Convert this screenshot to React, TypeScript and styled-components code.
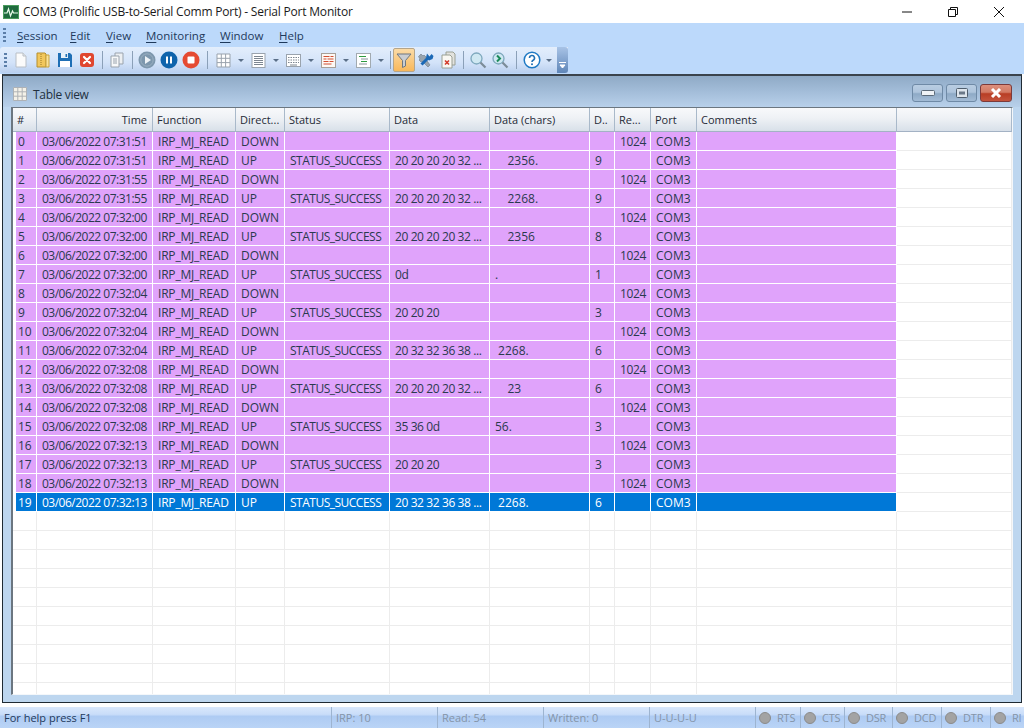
import React from "react";
import styled, { createGlobalStyle } from "styled-components";

const Global = createGlobalStyle`
  html, body { margin: 0; padding: 0; width: 1024px; height: 728px; overflow: hidden; background: #fff; }
  * { box-sizing: border-box; }
  body { font-family: "Open Sans", "Noto Sans", "Liberation Sans", sans-serif; font-size: 12px; color: #26384d; }
`;

const Page = styled.div`
  width: 1024px; height: 728px; display: flex; flex-direction: column; overflow: hidden;
`;
const TitleBar = styled.div`
  height: 23px; flex: none; display: flex; align-items: center; background: #fff; padding: 0 2px 0 3px;
`;
const TitleText = styled.span`
  margin-left: 4px; font-size: 12px; color: #1a1a1a; white-space: nowrap; flex: 1; letter-spacing: -0.2px;
`;
const WinBtn = styled.div`
  width: 46px; height: 23px; display: flex; align-items: center; justify-content: center;
`;
const Band = styled.div`
  flex: none; height: 51px; background: #bcd9fb; display: flex; flex-direction: column;
`;
const MenuBar = styled.div`
  height: 24px; flex: none; display: flex; align-items: center; padding-left: 3px;
`;
const Grip = styled.div`
  width: 3px; height: 14px; flex: none;
  background: repeating-linear-gradient(to bottom, #5b7ea8 0 2px, transparent 2px 4px);
`;
const MenuGap = styled.div`
  width: 11px; flex: none;
`;
const MenuItem = styled.span<{ $w: number }>`
  width: ${p => p.$w}px; flex: none; color: #1e395b; font-size: 11.5px; white-space: nowrap;
  u { text-underline-offset: 2px; }
`;
const ToolBar = styled.div`
  height: 26px; width: 568px; flex: none; display: flex; align-items: center; padding-left: 4px;
  background: linear-gradient(to bottom, #e3eefc 0%, #d3e3f9 60%, #b9cfee 100%);
  border-radius: 3px 0 0 3px; position: relative;
`;
const ToolBtn = styled.div<{ $on?: boolean }>`
  width: 22px; height: 24px; flex: none; display: flex; align-items: center; justify-content: center;
  ${p => p.$on ? `background: linear-gradient(to bottom,#fbdba6,#f8b85c); border:1px solid #b5a58a; border-radius:2px;` : ""}
`;
const Caret = styled.div<{ $w?: number }>`
  width: ${p => p.$w ?? 13}px; flex: none; display: flex; justify-content: center;
  &::after { content: ""; border-left: 3px solid transparent; border-right: 3px solid transparent; border-top: 3px solid #5a6f88; }
`;
const Sep = styled.div<{ $w: number }>`
  width: ${p => p.$w}px; height: 18px; flex: none; display: flex; justify-content: center;
  &::after { content: ""; width: 1px; height: 100%; background: #8ba0b8; }
`;
const Spacer = styled.div`
  width: 3px; flex: none;
`;
const Handle = styled.div`
  position: absolute; right: 0; top: 0; bottom: 0; width: 11px;
  background: linear-gradient(to bottom, #a8c3e6, #5f86b8); border-radius: 0 3px 3px 0;
  display: flex; align-items: flex-end; justify-content: center; padding-bottom: 3px;
`;
const Work = styled.div`
  flex: 1; min-height: 0; background: #fff; display: flex; flex-direction: column;
`;
const Frame = styled.div`
  flex: 1; min-height: 0; margin: 0 2px 4px 2px; border: 1px solid #1f2a33; border-top-width: 2px; border-top-color: #3a434c;
  background: #bdd6ef; display: flex; flex-direction: column; padding: 0 8px 7px 8px;
`;
const Caption = styled.div`
  height: 31px; flex: none; margin: 0 -8px; padding: 3px 9px 0 10px; display: flex; align-items: center; gap: 3px;
  background: linear-gradient(to bottom, #8faac6 0%, #a3bdd9 50%, #b8d0ea 100%);
`;
const CapIcon = styled.div`
  display: flex; padding-top: 2px;
`;
const CapTitle = styled.span`
  flex: 1; margin-left: 3px; padding-top: 3px; font-size: 12px; color: #22303f; letter-spacing: -0.3px;
`;
const CapBtn = styled.div<{ $close?: boolean }>`
  width: ${p => p.$close ? 32 : 31}px; height: 18px; border-radius: 3px; display: flex; align-items: center; justify-content: center;
  border: 1px solid ${p => p.$close ? "#7c3a3a" : "#6f8aa6"};
  background: ${p => p.$close
    ? "linear-gradient(to bottom,#dd8f7c 0%,#d27a64 45%,#b83d24 55%,#c4543d 100%)"
    : "linear-gradient(to bottom,#b9cde2 0%,#aec4dc 45%,#8eaac6 55%,#a3bcd6 100%)"};
`;
const Table = styled.div`
  flex: 1; min-height: 0; background: #fff; border-top: 1px solid #6b7680; border-left: 2px solid #6b7680;
  border-right: 1px solid #f4f7fa; border-bottom: 1px solid #f4f7fa; overflow: hidden;
`;
const cols = "116px 83px 49px 105px 100px 100px 25px 36px 46px 200px 1fr";
const Header = styled.div`
  height: 24px; display: grid; grid-template-columns: 24px ${cols};
`;
const Head = styled.div<{ $right?: boolean }>`
  display: flex; align-items: center; padding: 0 5px 1px 4px; justify-content: ${p => p.$right ? "flex-end" : "flex-start"};
  font-size: 11px; color: #1f2a36; white-space: nowrap; overflow: hidden;
  border-right: 1px solid #a9b9ca; border-bottom: 1px solid #a3b2c4;
  background: linear-gradient(to bottom, #f8f9fb 0%, #eef1f5 45%, #d8e0e9 100%);
`;
const Row = styled.div`
  height: 19px; display: grid; grid-template-columns: 3px 21px ${cols};
`;
type Tone = "pink" | "blue" | "empty";
const Cell = styled.div<{ $tone: Tone; $tight?: number; $inset?: number }>`
  padding: 0 2px 0 ${p => p.$inset ?? 5}px; line-height: 20px; white-space: pre; overflow: hidden;
  letter-spacing: ${p => p.$tight ?? 0}px;
  background: ${p => p.$tone === "pink" ? "#e0a3fb" : p.$tone === "blue" ? "#0078d7" : "#fff"};
  color: ${p => p.$tone === "blue" ? "#fff" : "#2a3a4e"};
  border-right: 1px solid ${p => p.$tone === "empty" ? "#ececec" : "#fff"};
  border-bottom: 1px solid ${p => p.$tone === "empty" ? "#ececec" : "#fff"};
`;
const Gutter = styled.div<{ $line?: boolean }>`
  border-bottom: 1px solid ${p => p.$line ? "#ececec" : "#fff"};
`;
const Status = styled.div`
  height: 21px; flex: none; display: flex; align-items: center; font-size: 11px;
  background: linear-gradient(to bottom, #d9e8fc 0%, #c9ddf9 35%, #aecbf3 45%, #bad4f6 100%);
`;
const StatusCell = styled.div<{ $w: number; $help?: boolean; $led?: boolean }>`
  width: ${p => p.$w}px; height: 100%; flex: none; display: flex; align-items: center; gap: 6px; white-space: nowrap;
  padding-left: ${p => p.$led ? 3 : 4}px;
  color: ${p => p.$help ? "#1e395b" : "#8494a8"};
  letter-spacing: ${p => p.$led ? -0.2 : 0}px;
  border-left: ${p => p.$help ? "none" : "1px solid #9db4d0"};
`;
const Led = styled.span`
  width: 12px; height: 12px; border-radius: 50%; background: #a3a3a3; border: 1px solid #8b8b8b; flex: none;
`;

const S = { width: 18, height: 18, viewBox: "0 0 18 18" };
const NewIcon = () => <svg {...S}><path d="M4 2h7l3 3v11H4z" fill="#fbfbfb" stroke="#b9bfc6" /><path d="M11 2v3h3" fill="#e6e9ec" stroke="#b9bfc6" /></svg>;
const FolderIcon = () => <svg {...S}><path d="M3 2h8l1 1v13H3z" fill="#f2c75c" stroke="#b58e2c" /><path d="M12 4h3v12h-3z" fill="#fbe39a" stroke="#c9a23c" /><path d="M7 3v12" stroke="#9c7a2a" strokeDasharray="1 1" /></svg>;
const SaveIcon = () => <svg {...S}><path d="M2 2h12l2 2v12H2z" fill="#1f6fb5" /><rect x="5" y="2" width="7" height="5" fill="#e9f2fa" /><rect x="9.5" y="3" width="1.6" height="3" fill="#1f6fb5" /><rect x="4" y="10" width="10" height="6" fill="#fff" /></svg>;
const CloseRedIcon = () => <svg {...S}><rect x="2" y="2" width="14" height="14" rx="3" fill="#e0472f" /><path d="M6 6l6 6M12 6l-6 6" stroke="#fff" strokeWidth="2.2" strokeLinecap="round" /></svg>;
const CopiesIcon = () => <svg {...S}><path d="M7 2h8v11H7z" fill="#eceff2" stroke="#9aa3ad" /><path d="M3 5h8v11H3z" fill="#f7f8f9" stroke="#9aa3ad" /><path d="M5 8h4M5 10h4M5 12h4" stroke="#9aa3ad" /></svg>;
const Round = ({ c, children }: { c: string; children: React.ReactNode }) => <svg {...S}><circle cx="9" cy="9" r="8.5" fill={c} />{children}</svg>;
const PlayIcon = () => <Round c="#7d97ad"><circle cx="9" cy="9" r="6.2" fill="none" stroke="#9bb0c2" /><path d="M7 5l6 4-6 4z" fill="#eef3f7" /></Round>;
const PauseIcon = () => <Round c="#0f64ac"><path d="M7 5.5v7M11 5.5v7" stroke="#fff" strokeWidth="2" /></Round>;
const StopIcon = () => <Round c="#e54a32"><rect x="5.5" y="5.5" width="7" height="7" rx="1" fill="#fff" /></Round>;
const GridIcon = () => <svg {...S}><path d="M3 3h13v13H3zM3 7.3h13M3 11.6h13M7.3 3v13M11.6 3v13" fill="#fff" stroke="#9aa3ad" /></svg>;
const ListIcon = () => <svg {...S}><rect x="3" y="2.5" width="13" height="14" fill="#fff" stroke="#9aa3ad" /><path d="M5 5.5h9M5 7.5h9M5 9.5h9M5 11.5h9M5 13.5h9" stroke="#7d8690" /></svg>;
const KeysIcon = () => <svg {...S}><rect x="2.5" y="3.5" width="14" height="12" fill="#fff" stroke="#9aa3ad" /><path d="M4 6.5h11M4 9h11M4 11.5h11" stroke="#7d8690" strokeDasharray="1.5 1" /><path d="M6 14h7" stroke="#7d8690" /></svg>;
const RedListIcon = () => <svg {...S}><rect x="2.5" y="2.5" width="14" height="14" fill="#fdf8f4" stroke="#a79f98" /><path d="M4.5 5.5h6M11.5 5.5h3M4.5 8h3M8.5 8h6M4.5 10.5h5M10.5 10.5h4M4.5 13h8" stroke="#d24f32" strokeWidth="1.2" /></svg>;
const GreenListIcon = () => <svg {...S}><rect x="2.5" y="2.5" width="14" height="14" fill="#fff" stroke="#a2aab0" /><path d="M5 5.5h7M7 10.5h6" stroke="#2e9b3e" strokeWidth="1.2" /><path d="M7 8h7M5 13h8" stroke="#8a929a" /></svg>;
const FilterIcon = () => <svg {...S}><path d="M2 3h14L10.5 9.5V15l-3 1.5V9.5z" fill="#c9cdd2" stroke="#6f7780" /></svg>;
const ToolsIcon = () => <svg {...S}><path d="M1.5 5.5L4 3l2 2 1-1 2 2-1 1 5 7-2 2-6-6-1 1-2-2 1-1z" fill="#98a4ae" stroke="#6e7a85" strokeWidth=".6" /><path d="M4.5 13.5L11 7" stroke="#1b69b6" strokeWidth="3" /><path d="M10 2.5l2.5 3 2-2.5 2 2-1 3-3.5 1.5-3-3z" fill="#1b69b6" /></svg>;
const DocXIcon = () => <svg {...S}><path d="M7 1h7l2 2v11H7z" fill="#e2e2de" stroke="#9aa094" /><path d="M3 4h8l2 2v11H3z" fill="#f9f8f3" stroke="#9aa094" /><path d="M6 9.5l4 4M10 9.5l-4 4" stroke="#d23a2a" strokeWidth="1.6" /></svg>;
const SearchIcon = ({ next }: { next?: boolean }) => <svg {...S}><circle cx="7.5" cy="7.5" r="5.5" fill="#cfe8f2" stroke="#7ea8bd" strokeWidth="1.3" />{next && <path d="M6 4.5l3 3-3 3" fill="none" stroke="#1c8a5a" strokeWidth="2" />}<path d="M11.5 11.5l5 5" stroke="#7c8c98" strokeWidth="2.2" /></svg>;
const HelpIcon = () => <svg {...S}><circle cx="9" cy="9" r="7.8" fill="#fff" stroke="#1f7ac4" strokeWidth="1.5" /><path d="M6.5 7a2.5 2.5 0 1 1 3.6 2.2c-.8.4-1.100.9-1.100 1.800" fill="none" stroke="#1f6fb5" strokeWidth="1.6" /><circle cx="9" cy="13.3" r="1" fill="#1f6fb5" /></svg>;
const TinyGrid = () => <svg width="14" height="14" viewBox="0 0 14 14"><path d="M.5.5h13v13H.5zM.5 4.8h13M.5 9.2h13M4.8.5v13M9.2.5v13" fill="#f4f1e8" stroke="#aeb2b6" /></svg>;
const AppIcon = () => <svg width="16" height="16" viewBox="0 0 16 16"><rect x=".5" y="1.5" width="15" height="13" fill="#1f6b3e" stroke="#4a9c5c" /><path d="M1 9h3l1.5-4 2 7 2-5 1 2h4.500" fill="none" stroke="#e8fbe9" strokeWidth="1.2" /></svg>;

type Rec = [string, string, string, string, string, string];
const U = (t: string, d: string, c: string, n: string): Rec => [t, "UP", d, c, n, ""];
const D = (t: string): Rec => [t, "DOWN", "", "", "", "1024"];
const H1 = "20 20 20 20 32 ...", H2 = "20 32 32 36 38 ...";
const rows: Rec[] = [
  D("07:31:51"), U("07:31:51", H1, "    2356.", "9"),
  D("07:31:55"), U("07:31:55", H1, "    2268.", "9"),
  D("07:32:00"), U("07:32:00", H1, "    2356", "8"),
  D("07:32:00"), U("07:32:00", "0d", ".", "1"),
  D("07:32:04"), U("07:32:04", "20 20 20", "", "3"),
  D("07:32:04"), U("07:32:04", H2, " 2268.", "6"),
  D("07:32:08"), U("07:32:08", H1, "    23", "6"),
  D("07:32:08"), U("07:32:08", "35 36 0d", "56.", "3"),
  D("07:32:13"), U("07:32:13", "20 20 20", "", "3"),
  D("07:32:13"), U("07:32:13", H2, " 2268.", "6"),
];

const heads: [string, boolean?][] = [["#"], ["Time", true], ["Function"], ["Direct..."], ["Status"], ["Data"], ["Data (chars)"], ["D.."], ["Re..."], ["Port"], ["Comments"], [""]];
const menus: [string, string, number][] = [["S", "ession", 53], ["E", "dit", 36], ["V", "iew", 40], ["M", "onitoring", 74], ["W", "indow", 59], ["H", "elp", 40]];

export default function App() {
  return (
    <Page>
      <Global />
      <TitleBar>
        <AppIcon />
        <TitleText>COM3 (Prolific USB-to-Serial Comm Port) - Serial Port Monitor</TitleText>
        <WinBtn><svg width="12" height="12" viewBox="0 0 12 12"><path d="M1 6h10" stroke="#111" /></svg></WinBtn>
        <WinBtn><svg width="12" height="12" viewBox="0 0 12 12"><path d="M1.5 3.5h7v7h-7zM3.5 3.5v-2h7v7h-2" fill="none" stroke="#111" /></svg></WinBtn>
        <WinBtn><svg width="12" height="12" viewBox="0 0 12 12"><path d="M1 1l10 10M11 1L1 11" stroke="#111" /></svg></WinBtn>
      </TitleBar>
      <Band>
        <MenuBar>
          <Grip />
          <MenuGap />
          {menus.map(([a, b, w]) => <MenuItem key={b} $w={w}><u>{a}</u>{b}</MenuItem>)}
        </MenuBar>
        <ToolBar>
          <Grip />
          <Spacer />
          <ToolBtn><NewIcon /></ToolBtn>
          <ToolBtn><FolderIcon /></ToolBtn>
          <ToolBtn><SaveIcon /></ToolBtn>
          <ToolBtn><CloseRedIcon /></ToolBtn>
          <Sep $w={8} />
          <ToolBtn><CopiesIcon /></ToolBtn>
          <Sep $w={8} />
          <ToolBtn><PlayIcon /></ToolBtn>
          <ToolBtn><PauseIcon /></ToolBtn>
          <ToolBtn><StopIcon /></ToolBtn>
          <Sep $w={10} />
          <ToolBtn><GridIcon /></ToolBtn><Caret />
          <ToolBtn><ListIcon /></ToolBtn><Caret />
          <ToolBtn><KeysIcon /></ToolBtn><Caret />
          <ToolBtn><RedListIcon /></ToolBtn><Caret />
          <ToolBtn><GreenListIcon /></ToolBtn><Caret />
          <Sep $w={6} />
          <ToolBtn $on><FilterIcon /></ToolBtn>
          <ToolBtn><ToolsIcon /></ToolBtn>
          <ToolBtn><DocXIcon /></ToolBtn>
          <Sep $w={8} />
          <ToolBtn><SearchIcon /></ToolBtn>
          <ToolBtn><SearchIcon next /></ToolBtn>
          <Sep $w={10} />
          <ToolBtn><HelpIcon /></ToolBtn><Caret $w={12} />
          <Handle><svg width="7" height="8" viewBox="0 0 7 8"><path d="M0 .5h7M1 3h5L3.5 6z" stroke="#fff" fill="#fff" /></svg></Handle>
        </ToolBar>
      </Band>
      <Work>
        <Frame>
          <Caption>
            <CapIcon><TinyGrid /></CapIcon>
            <CapTitle>Table view</CapTitle>
            <CapBtn><svg width="14" height="6"><rect x=".5" y=".5" width="13" height="5" rx="1" fill="#eef2f6" stroke="#5b6a79" /></svg></CapBtn>
            <CapBtn><svg width="12" height="10"><rect x=".5" y=".5" width="11" height="9" rx="1" fill="#dce4ec" stroke="#4f5e6d" /><rect x="3" y="3.5" width="6" height="3" fill="#6a7888" /></svg></CapBtn>
            <CapBtn $close><svg width="14" height="10" viewBox="0 0 14 10"><path d="M3 1l8 8M11 1L3 9" stroke="#fff" strokeWidth="3" /></svg></CapBtn>
          </Caption>
          <Table>
            <Header>
              {heads.map(([h, r], i) => <Head key={i} $right={r}>{h}</Head>)}
            </Header>
            {rows.map((r, i) => {
              const tone: Tone = i === 19 ? "blue" : "pink";
              const [time, dir, data, chars, n, req] = r;
              return (
                <Row key={i}>
                  <Gutter />
                  <Cell $tone={tone} $inset={2}>{i}</Cell>
                  <Cell $tone={tone} $tight={-0.5}>03/06/2022 {time}</Cell>
                  <Cell $tone={tone} $tight={-0.2}>IRP_MJ_READ</Cell>
                  <Cell $tone={tone}>{dir}</Cell>
                  <Cell $tone={tone} $tight={-0.5}>{dir === "UP" ? "STATUS_SUCCESS" : ""}</Cell>
                  <Cell $tone={tone} $tight={-0.4}>{data}</Cell>
                  <Cell $tone={tone}>{chars}</Cell>
                  <Cell $tone={tone}>{n}</Cell>
                  <Cell $tone={tone} $tight={-0.4}>{req}</Cell>
                  <Cell $tone={tone}>COM3</Cell>
                  <Cell $tone={tone} />
                  <Cell $tone="empty" />
                </Row>
              );
            })}
            {Array.from({ length: 10 }, (_, i) => (
              <Row key={i}>
                <Gutter $line />
                {Array.from({ length: 12 }, (_, j) => <Cell key={j} $tone="empty" />)}
              </Row>
            ))}
          </Table>
        </Frame>
      </Work>
      <Status>
        <StatusCell $w={331} $help>For help press F1</StatusCell>
        <StatusCell $w={106}>IRP: 10</StatusCell>
        <StatusCell $w={106}>Read: 54</StatusCell>
        <StatusCell $w={106}>Written: 0</StatusCell>
        <StatusCell $w={106}>U-U-U-U</StatusCell>
        <StatusCell $w={45} $led><Led />RTS</StatusCell>
        <StatusCell $w={44} $led><Led />CTS</StatusCell>
        <StatusCell $w={48} $led><Led />DSR</StatusCell>
        <StatusCell $w={49} $led><Led />DCD</StatusCell>
        <StatusCell $w={49} $led><Led />DTR</StatusCell>
        <StatusCell $w={34} $led><Led />RI</StatusCell>
      </Status>
    </Page>
  );
}
